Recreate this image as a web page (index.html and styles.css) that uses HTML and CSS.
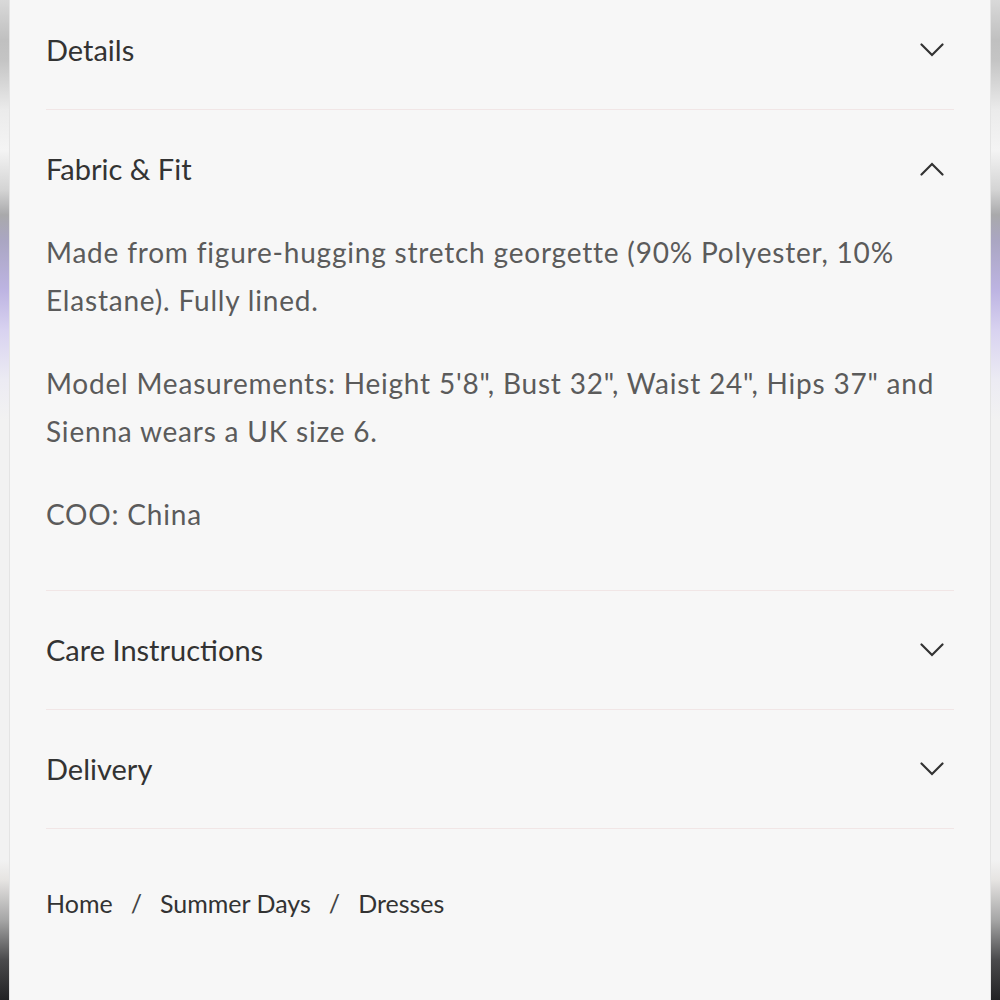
FILE: index.html
```html
<!DOCTYPE html>
<html lang="en">
<head>
<meta charset="utf-8">
<title>Product details</title>
<link rel="stylesheet" href="styles.css">
</head>
<body>
<div class="frame">
  <div class="edge edge-left"></div>
  <main class="page">
    <section class="accordion">
      <div class="item">
        <div class="item-head">
          <span class="item-title">Details</span>
          <svg class="chev" viewBox="0 0 24 14" width="24" height="14"><path d="M1.5 1.5 L12 12 L22.5 1.5"/></svg>
        </div>
      </div>
      <div class="item item-open">
        <div class="item-head">
          <span class="item-title">Fabric &amp; Fit</span>
          <svg class="chev" viewBox="0 0 24 14" width="24" height="14"><path d="M1.5 12.5 L12 2 L22.5 12.5"/></svg>
        </div>
        <div class="item-body">
          <p>Made from figure-hugging stretch georgette (90% Polyester, 10% Elastane). Fully lined.</p>
          <p>Model Measurements: Height 5'8", Bust 32", Waist 24", Hips 37" and Sienna wears a UK size 6.</p>
          <p>COO: China</p>
        </div>
      </div>
      <div class="item">
        <div class="item-head">
          <span class="item-title">Care Instructions</span>
          <svg class="chev" viewBox="0 0 24 14" width="24" height="14"><path d="M1.5 1.5 L12 12 L22.5 1.5"/></svg>
        </div>
      </div>
      <div class="item">
        <div class="item-head">
          <span class="item-title">Delivery</span>
          <svg class="chev" viewBox="0 0 24 14" width="24" height="14"><path d="M1.5 1.5 L12 12 L22.5 1.5"/></svg>
        </div>
      </div>
    </section>
    <nav class="crumbs">
      <a class="crumb" href="#">Home</a>
      <span class="sep">/</span>
      <a class="crumb" href="#">Summer Days</a>
      <span class="sep">/</span>
      <a class="crumb" href="#">Dresses</a>
    </nav>
  </main>
  <div class="edge edge-right"></div>
</div>
</body>
</html>
```
FILE: styles.css
```css
html, body {
  margin: 0;
  padding: 0;
  height: 100%;
  overflow: hidden;
}
body {
  background: #f7f7f7;
  font-family: "Lato", "Liberation Sans", sans-serif;
  color: #333;
}
.frame {
  display: flex;
  height: 1000px;
}
.edge {
  flex: 0 0 10px;
  background: linear-gradient(to bottom,
    #d9d9d9 0px, #c0c0c0 40px, #c4c4c4 60px, #ebebeb 110px, #f4f4f4 150px,
    #d4d4d4 190px, #a9a9ab 215px, #aaa6c2 240px, #bdb4e2 290px, #d8d2f0 330px,
    #ecebf3 380px, #f2f2f2 420px, #f2f2f2 860px, #e6e4e2 880px,
    #a6a6a6 920px, #4a4a4c 960px, #222224 1000px);
}
.edge-left {
  box-shadow: inset -1px 0 0 #e4e4e4;
}
.edge-right {
  box-shadow: inset 1px 0 0 #e4e4e4;
}
.page {
  flex: 1;
  padding: 0 36px 0 36px;
}
.accordion {
  margin-top: -9px;
}
.item {
  border-bottom: 1px solid #f1e6e6;
}
.item-head {
  display: flex;
  align-items: center;
  justify-content: space-between;
  padding: 39px 10px 39px 0;
  line-height: 40px;
}
.item-title {
  font-size: 29px;
  color: #333;
}
.chev {
  fill: none;
  stroke: #333;
  stroke-width: 2.2;
  stroke-linecap: round;
  stroke-linejoin: miter;
}
.item-body {
  padding-bottom: 52px;
  color: #5b5b5b;
  font-size: 28px;
  letter-spacing: 0.8px;
  line-height: 48px;
}
.item-body p {
  margin: 0 0 35px;
}
.item-body p:last-child {
  margin-bottom: 0;
}
.crumbs {
  display: flex;
  align-items: center;
  gap: 18px;
  margin-top: 57px;
  font-size: 25px;
  line-height: 34px;
  color: #333;
}
.crumb {
  color: #333;
  text-decoration: none;
}
.sep {
  color: #444;
}
```
